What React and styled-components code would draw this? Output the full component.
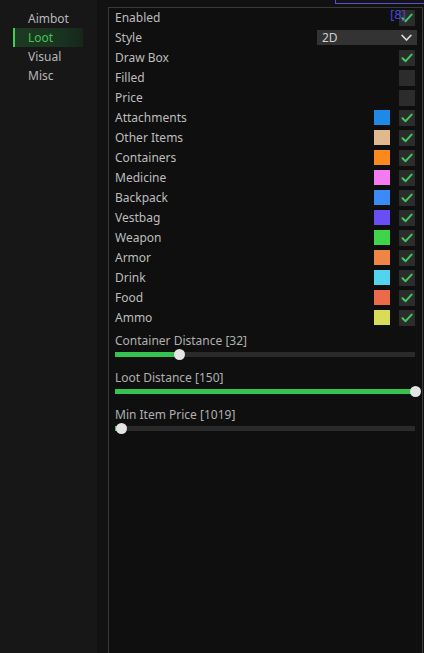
import React from "react";
import styled, { createGlobalStyle } from "styled-components";

const Global = createGlobalStyle`
  html, body { margin: 0; padding: 0; background: #111111; }
  body { font-family: "Noto Sans", "Open Sans", sans-serif; }
`;

const Shell = styled.div`
  position: relative;
  display: flex;
  width: 424px;
  height: 653px;
  overflow: hidden;
  background: #111111;
`;

const Sidebar = styled.nav`
  flex: 0 0 97px;
  background: #171717;
  padding-top: 9px;
  display: flex;
  flex-direction: column;
`;

const NavItem = styled.div`
  position: relative;
  height: 19px;
  margin-left: 13px;
  width: 70px;
  padding-left: 13px;
  box-sizing: border-box;
  display: flex;
  align-items: center;
  font-size: 12px;
  color: ${(p) => (p.$active ? "#44c455" : "#b8b8b8")};
  border-left: 2px solid ${(p) => (p.$active ? "#3dd14f" : "transparent")};
  background: ${(p) =>
    p.$active
      ? "linear-gradient(90deg, #1d3a22 0%, #1a3320 70%, #17261a 100%)"
      : "transparent"};
`;

const Gutter = styled.div`
  flex: 0 0 11px;
  background: #121212;
`;

const Panel = styled.section`
  flex: 0 0 314px;
  margin-top: 7px;
  box-sizing: border-box;
  border: 1px solid #3a3a3a;
  border-bottom: none;
  background: #0f0f0f;
  padding: 0 7px 0 6px;
  display: flex;
  flex-direction: column;
`;

const Rows = styled.div`
  margin-top: -1px;
  display: flex;
  flex-direction: column;
`;

const Row = styled.div`
  height: 20px;
  display: flex;
  align-items: center;
  gap: 9px;
  font-size: 12px;
  color: #bdbdbd;
`;

const Label = styled.span`
  flex: 1;
`;

const Box = styled.div`
  width: 16px;
  height: 16px;
  margin-top: 1px;
  background: #2c2c2c;
  display: flex;
  align-items: center;
  justify-content: center;
`;

const Swatch = styled.div`
  width: 16px;
  height: 15px;
  margin-top: 1px;
  background: ${(p) => p.$c};
`;

const Combo = styled.div`
  width: 100px;
  height: 15px;
  margin-right: -2px;
  margin-top: 1px;
  background: #333333;
  display: flex;
  align-items: center;
  justify-content: space-between;
  padding: 0 5px;
  box-sizing: border-box;
  color: #cfcfcf;
  font-size: 12px;
`;

const SliderBlock = styled.div`
  display: flex;
  flex-direction: column;
  padding-top: 4px;
  height: 37px;
  box-sizing: border-box;
`;

const SliderLabel = styled.div`
  font-size: 12px;
  color: #b0b0b0;
  height: 18px;
  display: flex;
  align-items: center;
`;

const Track = styled.div`
  position: relative;
  margin-top: 3px;
  width: 300px;
  height: 5px;
  background: #2a2a2a;
`;

const Fill = styled.div`
  height: 100%;
  background: #36c250;
`;

const Knob = styled.div`
  position: absolute;
  top: 50%;
  width: 11px;
  height: 11px;
  margin-left: -5px;
  margin-top: -5.5px;
  border-radius: 50%;
  background: #e4e4e4;
`;

const Tip = styled.div`
  position: absolute;
  left: 335px;
  top: 0;
  width: 89px;
  height: 3px;
  background: #141414;
  border-left: 1px solid #5a50d8;
  border-bottom: 1px solid #5a50d8;
`;

const Badge = styled.div`
  position: absolute;
  left: 390px;
  top: 5px;
  font-size: 13px;
  color: #4a44d6;
  font-family: "Noto Sans", sans-serif;
`;

const Check = () => (
  <svg width="12" height="12" viewBox="0 0 12 12">
    <path d="M1.5 6.2 L4.6 9.2 L10.6 2.6" fill="none" stroke="#3ecb5c" strokeWidth="2" strokeLinecap="round" strokeLinejoin="round" />
  </svg>
);

const Chevron = () => (
  <svg width="11" height="8" viewBox="0 0 11 8">
    <path d="M1.2 1.5 L5.5 6 L9.8 1.5" fill="none" stroke="#d8d8d8" strokeWidth="1.8" strokeLinecap="round" strokeLinejoin="round" />
  </svg>
);

const CheckBox = ({ on }) => <Box>{on && <Check />}</Box>;

const items = [
  ["Attachments", "#1f8ae6"],
  ["Other Items", "#e0b98e"],
  ["Containers", "#fb8a1e"],
  ["Medicine", "#f47cf0"],
  ["Backpack", "#3b8af5"],
  ["Vestbag", "#6a4ef5"],
  ["Weapon", "#3fd44b"],
  ["Armor", "#ee8445"],
  ["Drink", "#52d4ee"],
  ["Food", "#ec6a4c"],
  ["Ammo", "#d9dc57"],
];

const sliders = [
  ["Container Distance [32]", 21.3],
  ["Loot Distance [150]", 100],
  ["Min Item Price [1019]", 2],
];

export default function App() {
  return (
    <>
      <Global />
      <Shell>
        <Sidebar>
          <NavItem>Aimbot</NavItem>
          <NavItem $active>Loot</NavItem>
          <NavItem>Visual</NavItem>
          <NavItem>Misc</NavItem>
        </Sidebar>
        <Gutter />
        <Panel>
          <Rows>
            <Row>
              <Label>Enabled</Label>
              <CheckBox on />
            </Row>
            <Row>
              <Label>Style</Label>
              <Combo>
                <span>2D</span>
                <Chevron />
              </Combo>
            </Row>
            <Row>
              <Label>Draw Box</Label>
              <CheckBox on />
            </Row>
            <Row>
              <Label>Filled</Label>
              <CheckBox />
            </Row>
            <Row>
              <Label>Price</Label>
              <CheckBox />
            </Row>
            {items.map(([name, c]) => (
              <Row key={name}>
                <Label>{name}</Label>
                <Swatch $c={c} />
                <CheckBox on />
              </Row>
            ))}
          </Rows>
          {sliders.map(([name, pct]) => (
            <SliderBlock key={name}>
              <SliderLabel>{name}</SliderLabel>
              <Track>
                <Fill style={{ width: `${pct}%` }} />
                <Knob style={{ left: `${pct}%` }} />
              </Track>
            </SliderBlock>
          ))}
        </Panel>
        <Tip />
        <Badge>[8]</Badge>
      </Shell>
    </>
  );
}
